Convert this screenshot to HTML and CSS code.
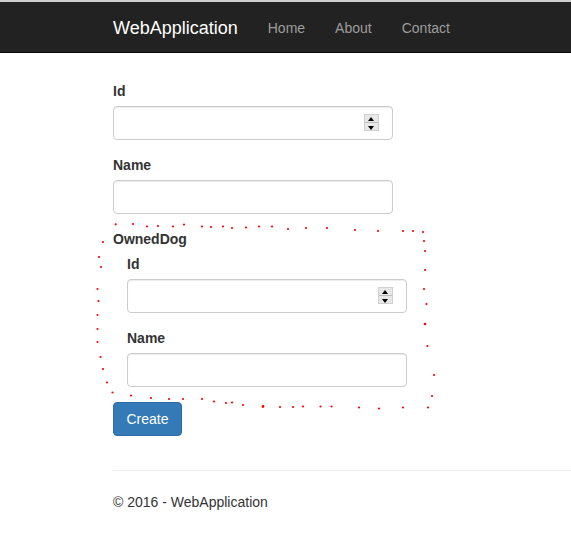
FILE: index.html
```html
<!DOCTYPE html>
<html>
<head>
<meta charset="utf-8">
<title>Create - WebApplication</title>
<link rel="stylesheet" href="styles.css">
</head>
<body>
<div class="topline"></div>
<nav class="navbar">
  <a class="brand" href="#">WebApplication</a>
  <a class="nav-link" href="#">Home</a>
  <a class="nav-link" href="#">About</a>
  <a class="nav-link" href="#">Contact</a>
</nav>
<main class="content">
  <form class="form">
    <div class="form-group">
      <label class="label">Id</label>
      <div class="input-wrap">
        <input class="input" type="text">
        <span class="spinner"><span class="spin-up"></span><span class="spin-down"></span></span>
      </div>
    </div>
    <div class="form-group">
      <label class="label">Name</label>
      <div class="input-wrap"><input class="input" type="text"></div>
    </div>
    <div class="group-title">OwnedDog</div>
    <div class="nested">
      <div class="form-group">
        <label class="label">Id</label>
        <div class="input-wrap">
          <input class="input" type="text">
          <span class="spinner"><span class="spin-up"></span><span class="spin-down"></span></span>
        </div>
      </div>
      <div class="form-group">
        <label class="label">Name</label>
        <div class="input-wrap"><input class="input" type="text"></div>
      </div>
    </div>
    <button class="btn" type="button">Create</button>
  </form>
  <hr class="rule">
  <footer class="footer">© 2016 - WebApplication</footer>
</main>
<svg class="scribble" width="571" height="546" viewBox="0 0 571 546">
  <g fill="#ff0000">
    <circle cx="115.7" cy="224.3" r="1.1"/><circle cx="133" cy="224" r="1.1"/><circle cx="147" cy="226.5" r="1.1"/>
    <circle cx="158" cy="226" r="1.1"/><circle cx="173" cy="226.5" r="1.1"/><circle cx="184" cy="224.5" r="1.1"/>
    <circle cx="202" cy="226.5" r="1.1"/><circle cx="211" cy="227" r="1.1"/><circle cx="223" cy="226.5" r="1.1"/>
    <circle cx="232" cy="228" r="1.1"/><circle cx="246" cy="227.5" r="1.1"/><circle cx="259" cy="226.5" r="1.1"/>
    <circle cx="272" cy="226.5" r="1.1"/><circle cx="288" cy="229" r="1.1"/><circle cx="306" cy="228" r="1.1"/>
    <circle cx="327" cy="228" r="1.1"/><circle cx="355" cy="230" r="1.1"/><circle cx="378" cy="231" r="1.1"/>
    <circle cx="403" cy="231" r="1.1"/><circle cx="413" cy="231" r="1.1"/><circle cx="423" cy="232" r="1.1"/>
    <circle cx="424" cy="241" r="1.1"/><circle cx="425" cy="251" r="1.1"/><circle cx="425" cy="270" r="1.1"/>
    <circle cx="424" cy="289" r="1.1"/><circle cx="426.5" cy="304" r="1.1"/><circle cx="425" cy="324" r="1.3"/>
    <circle cx="427.5" cy="346" r="1.1"/><circle cx="434" cy="375" r="1.1"/><circle cx="432" cy="396" r="1.1"/>
    <circle cx="428" cy="407.5" r="1.1"/>
    <circle cx="103" cy="242" r="1.1"/><circle cx="99" cy="257" r="1.1"/><circle cx="101" cy="267" r="1.1"/>
    <circle cx="97.5" cy="289" r="1.1"/><circle cx="98.5" cy="301" r="1.1"/><circle cx="97.5" cy="315" r="1.1"/>
    <circle cx="97.5" cy="329" r="1.1"/><circle cx="97.5" cy="342" r="1.1"/><circle cx="100.5" cy="357" r="1.1"/>
    <circle cx="103" cy="369" r="1.1"/><circle cx="107" cy="382.5" r="1.1"/><circle cx="112.5" cy="392.5" r="1.1"/>
    <circle cx="131" cy="395.5" r="1.1"/><circle cx="151" cy="398" r="1.1"/><circle cx="169" cy="399" r="1.1"/>
    <circle cx="183" cy="399" r="1.1"/><circle cx="202" cy="399" r="1.1"/><circle cx="214" cy="401.5" r="1.1"/>
    <circle cx="226" cy="403" r="1.1"/><circle cx="232" cy="402.5" r="1.1"/><circle cx="243" cy="405" r="1.1"/>
    <circle cx="263" cy="406.5" r="1.4"/><circle cx="280" cy="407" r="1.1"/><circle cx="293" cy="407" r="1.1"/>
    <circle cx="303" cy="406.5" r="1.1"/><circle cx="320.5" cy="406.5" r="1.1"/><circle cx="331.5" cy="406.5" r="1.1"/>
    <circle cx="359" cy="407.5" r="1.1"/><circle cx="379" cy="408.5" r="1.1"/><circle cx="403" cy="407.5" r="1.1"/>
  </g>
</svg>
</body>
</html>
```

FILE: styles.css
```css
html, body {
  margin: 0;
  padding: 0;
  background: #ffffff;
}

body {
  position: relative;
  width: 571px;
  height: 546px;
  overflow: hidden;
  font-family: "Liberation Sans", Arial, Helvetica, sans-serif;
  font-size: 14px;
  line-height: 20px;
  color: #333333;
}

.topline {
  height: 2px;
  background: #cfcfcf;
}

.navbar {
  display: flex;
  align-items: center;
  box-sizing: border-box;
  height: 51px;
  padding-top: 2px;
  background: #222222;
  border-bottom: 1px solid #080808;
  padding-left: 113px;
}

.brand {
  font-size: 18px;
  line-height: 20px;
  color: #ffffff;
  text-decoration: none;
  padding-right: 15px;
}

.nav-link {
  color: #9d9d9d;
  text-decoration: none;
  padding: 0 15px;
}

.content {
  padding: 28px 0 0 113px;
}

.form {
  display: flex;
  flex-direction: column;
}

.form-group {
  display: flex;
  flex-direction: column;
  margin-bottom: 15px;
}

.label {
  font-weight: bold;
  margin-bottom: 5px;
}

.group-title {
  font-weight: bold;
  margin-bottom: 5px;
}

.nested {
  padding-left: 14px;
}

.input-wrap {
  position: relative;
  width: 280px;
}

.input {
  box-sizing: border-box;
  display: block;
  width: 280px;
  height: 34px;
  padding: 6px 12px;
  border: 1px solid #cccccc;
  border-radius: 4px;
  background: #ffffff;
  font-family: inherit;
  font-size: 14px;
  box-shadow: inset 0 1px 1px rgba(0, 0, 0, 0.075);
  outline: none;
}

.spinner {
  position: absolute;
  left: 251px;
  top: 8px;
  width: 15px;
  height: 17px;
  display: flex;
  flex-direction: column;
  box-sizing: border-box;
  background: #e8e8e8;
  border: 1px solid #d0d0d0;
}

.spin-up, .spin-down {
  flex: 1;
  position: relative;
}

.spin-up {
  border-bottom: 1px solid #bdbdbd;
}

.spin-up::after, .spin-down::after {
  content: "";
  position: absolute;
  left: 3px;
  top: 2px;
  width: 0;
  height: 0;
  border-left: 3.5px solid transparent;
  border-right: 3.5px solid transparent;
}

.spin-up::after {
  border-bottom: 4px solid #000000;
}

.spin-down::after {
  top: 3px;
  border-top: 4px solid #000000;
}

.btn {
  align-self: flex-start;
  box-sizing: border-box;
  height: 34px;
  width: 69px;
  padding: 0;
  border: 1px solid #2e6da4;
  border-radius: 4px;
  background: #337ab7;
  color: #ffffff;
  font-family: inherit;
  font-size: 14px;
  line-height: 20px;
}

.rule {
  margin: 34px 0 0 0;
  border: 0;
  border-top: 1px solid #eeeeee;
  height: 0;
}

.footer {
  margin-top: 21px;
}

.scribble {
  position: absolute;
  left: 0;
  top: 0;
  pointer-events: none;
}
```
